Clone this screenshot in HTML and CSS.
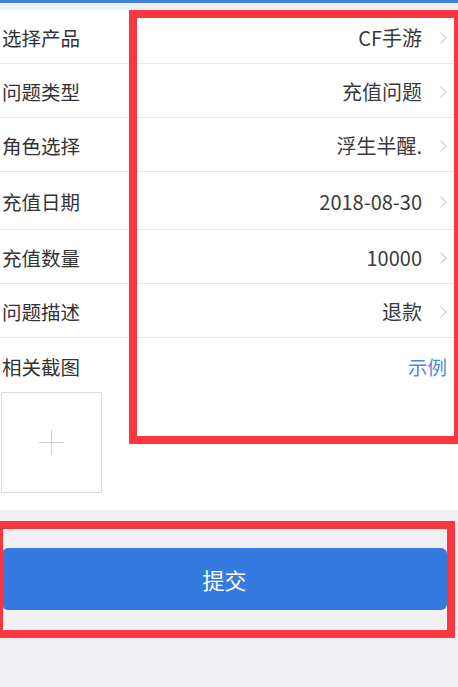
FILE: index.html
```html
<!DOCTYPE html>
<html lang="zh-CN">

<head>
    <meta charset="UTF-8">
    <meta name="viewport" content="width=device-width, initial-scale=1.0">
    <title>提交问题</title>
    <link rel="stylesheet" href="styles.css">
</head>

<body>
    <div class="page">
        <div class="topbar"></div>
        <div class="form">
            <div class="row">
                <span class="label">选择产品</span>
                <span class="value">CF手游</span>
                <span class="arrow"></span>
            </div>
            <div class="row">
                <span class="label">问题类型</span>
                <span class="value">充值问题</span>
                <span class="arrow"></span>
            </div>
            <div class="row">
                <span class="label">角色选择</span>
                <span class="value">浮生半醒.</span>
                <span class="arrow"></span>
            </div>
            <div class="row row-tall">
                <span class="label">充值日期</span>
                <span class="value">2018-08-30</span>
                <span class="arrow"></span>
            </div>
            <div class="row">
                <span class="label">充值数量</span>
                <span class="value">10000</span>
                <span class="arrow"></span>
            </div>
            <div class="row">
                <span class="label">问题描述</span>
                <span class="value">退款</span>
                <span class="arrow"></span>
            </div>
            <div class="row row-last">
                <span class="label">相关截图</span>
                <span class="link">示例</span>
            </div>
            <div class="upload">
                <div class="plus"></div>
            </div>
        </div>
        <div class="footer">
            <button class="submit">提交</button>
        </div>

        <!-- annotation marks -->
        <div class="mark mark-list"></div>
        <div class="mark mark-button"></div>
    </div>
</body>

</html>
```

FILE: styles.css
```css
* {
    margin: 0;
    padding: 0;
    box-sizing: border-box;
}

body {
    background-color: #efeff4;
    font-family: "Noto Sans CJK SC", "Noto Sans", sans-serif;
    color: #333;
}

.page {
    position: relative;
    width: 458px;
    height: 687px;
}

.topbar {
    height: 10px;
    background-color: #eef0f5;
    border-top: 3px solid #3d7fd8;
}

.form {
    background-color: #fff;
    padding-bottom: 17px;
}

.row {
    display: flex;
    align-items: center;
    height: 54px;
    padding: 2px 11px 0 2px;
    border-bottom: 1px solid #e8e8e8;
    font-size: 19.5px;
}

.row-tall {
    height: 58px;
}

.row-last {
    height: 54px;
    border-bottom: none;
}

.label {
    flex: 1;
    color: #333;
}

.value {
    color: #3a3a3a;
    font-size: 20px;
}

.arrow {
    width: 8px;
    height: 8px;
    margin-left: 15px;
    margin-right: 2px;
    border-top: 1.5px solid #c8c8cd;
    border-right: 1.5px solid #c8c8cd;
    transform: rotate(45deg);
}

.link {
    color: #4a89dc;
}

.upload {
    display: flex;
    align-items: center;
    justify-content: center;
    width: 101px;
    height: 101px;
    margin-left: 1px;
    border: 1px solid #dcdcdc;
}

.plus {
    position: relative;
    width: 25px;
    height: 25px;
}

.plus::before,
.plus::after {
    content: "";
    position: absolute;
    background-color: #d2d2d2;
}

.plus::before {
    left: 0;
    top: 12px;
    width: 25px;
    height: 1px;
}

.plus::after {
    left: 12px;
    top: 0;
    width: 1px;
    height: 25px;
}

.footer {
    padding: 38px 11px 0 2px;
}

.submit {
    width: 100%;
    height: 62px;
    border: none;
    border-radius: 6px;
    background-color: #357ade;
    color: #fff;
    font-family: inherit;
    font-size: 22px;
}

.mark {
    position: absolute;
    border: 8px solid #f8383e;
}

.mark-list {
    left: 129px;
    top: 10px;
    width: 329px;
    height: 434px;
    border-right-width: 4px;
}

.mark-button {
    left: 0;
    top: 521px;
    width: 455px;
    height: 117px;
    border-left-width: 3px;
}
```
